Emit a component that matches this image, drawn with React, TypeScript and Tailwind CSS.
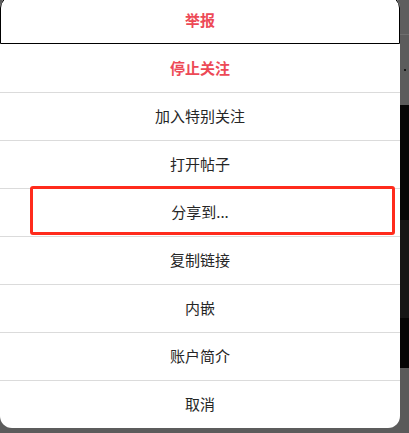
import React from 'react';

const items: { label: string; danger?: boolean }[] = [
  { label: '举报', danger: true },
  { label: '停止关注', danger: true },
  { label: '加入特别关注' },
  { label: '打开帖子' },
  { label: '分享到...' },
  { label: '复制链接' },
  { label: '内嵌' },
  { label: '账户简介' },
  { label: '取消' },
];

const OptionsMenu: React.FC = () => {
  return (
    <div className="relative w-[400px] shrink-0 -mt-1 bg-white rounded-[12px] flex flex-col">
      {items.map((item, i) => (
        <button
          key={item.label}
          className={
            i === 0
              ? 'h-[48px] w-full rounded-t-[12px] border border-black flex items-center justify-center text-[15px] font-bold text-[#ed4956]'
              : i === 1
              ? 'h-[48px] w-full flex items-center justify-center text-[15px] font-bold text-[#ed4956]'
              : 'h-[48px] w-full border-t border-[#dbdbdb] flex items-center justify-center text-[15px] text-[#262626]'
          }
        >
          {item.label}
        </button>
      ))}
      {/* annotation around the share row */}
      <div className="absolute left-[30px] top-[190px] w-[365px] h-[49px] border-[3px] border-[#ff2b1c] rounded-[3px] pointer-events-none" />
    </div>
  );
};

export default function App() {
  return (
    <div
      className="w-[409px] h-[433px] overflow-hidden bg-[#5c5c5c] flex items-start"
      style={{ fontFamily: '"Noto Sans CJK SC", "Noto Sans", sans-serif' }}
    >
      <OptionsMenu />
      <div className="flex-1 h-full flex flex-col">
        <div className="h-[35px] border-b border-[#6e6e6e] bg-[#5e5e5e]" />
        <div className="h-[70px] bg-[#5c5c5c] flex items-center justify-center">
          <span className="w-[2px] h-[2px] rounded-full bg-black" />
        </div>
        <div className="h-[115px] bg-[#060606]" />
        <div className="h-[98px] bg-[#161616]" />
        <div className="h-[50px] bg-[#050505]" />
        <div className="flex-1 bg-[#5a5a5a]" />
      </div>
    </div>
  );
}
